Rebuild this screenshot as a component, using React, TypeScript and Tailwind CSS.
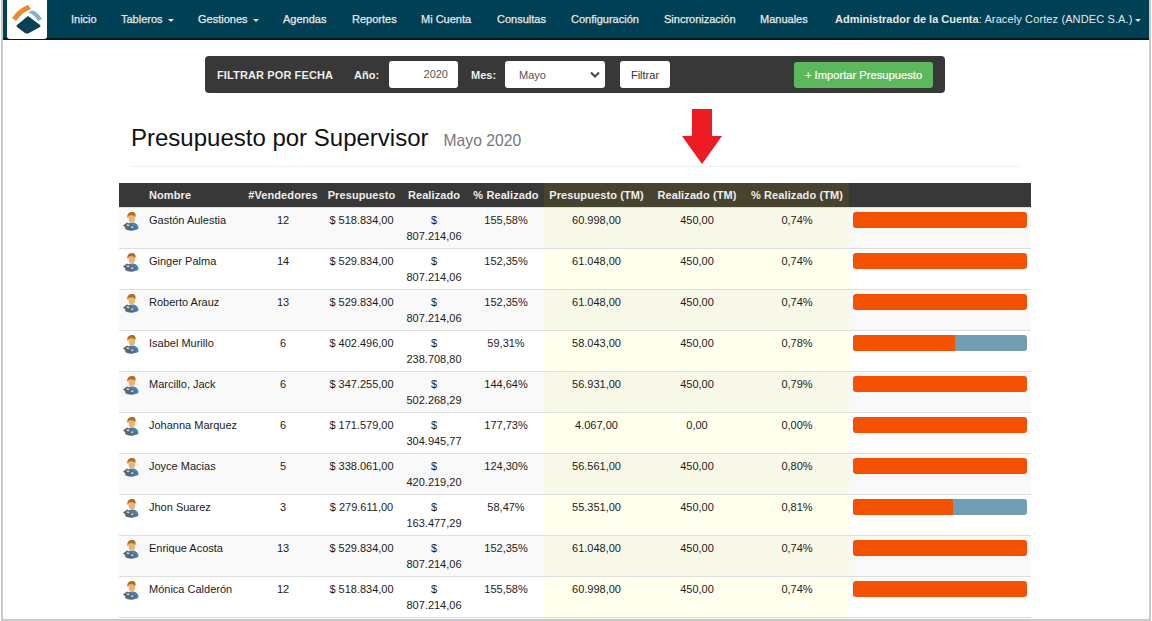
const navItems = [
  { label: "Inicio", w: "w-[50px]" },
  { label: "Tableros", caret: true, w: "w-[77px]" },
  { label: "Gestiones", caret: true, w: "w-[85px]" },
  { label: "Agendas", w: "w-[69px]" },
  { label: "Reportes", w: "w-[69px]" },
  { label: "Mi Cuenta", w: "w-[76px]" },
  { label: "Consultas", w: "w-[74px]" },
  { label: "Configuración", w: "w-[93px]" },
  { label: "Sincronización", w: "w-[96px]" },
  { label: "Manuales", w: "w-[75px]" },
];

const rows = [
  ["Gastón Aulestia", "12", "$ 518.834,00", "$ 807.214,06", "155,58%", "60.998,00", "450,00", "0,74%", 100],
  ["Ginger Palma", "14", "$ 529.834,00", "$ 807.214,06", "152,35%", "61.048,00", "450,00", "0,74%", 100],
  ["Roberto Arauz", "13", "$ 529.834,00", "$ 807.214,06", "152,35%", "61.048,00", "450,00", "0,74%", 100],
  ["Isabel Murillo", "6", "$ 402.496,00", "$ 238.708,80", "59,31%", "58.043,00", "450,00", "0,78%", 58.6],
  ["Marcillo, Jack", "6", "$ 347.255,00", "$ 502.268,29", "144,64%", "56.931,00", "450,00", "0,79%", 100],
  ["Johanna Marquez", "6", "$ 171.579,00", "$ 304.945,77", "177,73%", "4.067,00", "0,00", "0,00%", 100],
  ["Joyce Macias", "5", "$ 338.061,00", "$ 420.219,20", "124,30%", "56.561,00", "450,00", "0,80%", 100],
  ["Jhon Suarez", "3", "$ 279.611,00", "$ 163.477,29", "58,47%", "55.351,00", "450,00", "0,81%", 57.5],
  ["Enrique Acosta", "13", "$ 529.834,00", "$ 807.214,06", "152,35%", "61.048,00", "450,00", "0,74%", 100],
  ["Mónica Calderón", "12", "$ 518.834,00", "$ 807.214,06", "155,58%", "60.998,00", "450,00", "0,74%", 100],
] as const;

const Caret = () => (
  <span className="inline-block ml-[5px] align-middle border-x-[3px] border-t-[3px] border-x-transparent border-t-[#e8e8e8]"></span>
);

const Logo = () => (
  <svg width="40" height="39" viewBox="0 0 40 39">
    <path d="M5 18 C10 11 15 7 21 5 L24 9 C18 11 13 15 9 21 Z" fill="#f08a2c" />
    <path d="M23 11 C27 9 31 13 35 19 L31 21 C29 17 26 14 22 13 Z" fill="#7fb3cc" />
    <path d="M21 16 L33 25 Q34 26 33 27 L22 33 Q20 34 18 33 L10 27 Q9 26 10 25 Z" fill="#0d4057" />
  </svg>
);

const UserIcon = () => (
  <svg width="16" height="19" viewBox="0 0 16 19">
    <path d="M2 17 C3 12 6 10.5 9.5 10.5 C13 10.5 15.5 13 15.5 16.5 C13 19 5 19.5 2 17 Z" fill="#3f82bd" />
    <path d="M5 3 C6 1 11 1 12 3 L12 8 C11 11 7 11 6 9 Z" fill="#f2b071" />
    <path d="M4.5 6 C3.5 1 7 0 9 0 C12 0 13 2 12.5 5 C11 3 8 3 6 3.5 Z" fill="#a8701f" />
    <path d="M0 13.5 L4 10.5 L13 15 L9 18.5 L5 17.5 Z" fill="#59646d" />
    <path d="M3 13 L5 12 L7 13.5 L5 14.5 Z M7.5 15 L9.5 14 L11 15 L9 16.5 Z" fill="#c3ccd3" />
  </svg>
);

const App = () => {
  return (
    <div className="relative w-[1150px] h-[621px] ml-px overflow-hidden bg-white border-x-2 border-b-2 border-[#c9c9c9] font-['Liberation_Sans',Arial,sans-serif] text-[11px] leading-4 text-[#1c1c1c]">
      {/* NAV */}
      <div className="flex items-start h-10 -ml-px bg-[#004054] border-b-2 border-[#0b1a20] text-[11px] text-[#e8e8e8]">
        <div className="flex items-center justify-center w-10 h-[39px] ml-[5px] bg-white rounded-b-[3px]">
          <Logo />
        </div>
        <div className="flex pl-[10px] [-webkit-text-stroke:0.25px_#e8e8e8]">
          {navItems.map((item) => (
            <div key={item.label} className={`${item.w} h-[38px] pl-[14px] leading-[38px] whitespace-nowrap`}>
              {item.label}
              {item.caret && <Caret />}
            </div>
          ))}
        </div>
        <div className="ml-[14px] h-[38px] leading-[38px] whitespace-nowrap">
          <span className="font-bold">Administrador de la Cuenta</span>
          <span className="tracking-[0.12px]">: Aracely Cortez (ANDEC S.A.)</span>
          <span className="inline-block ml-[2px] align-middle border-x-[3px] border-t-[3px] border-x-transparent border-t-[#e8e8e8]"></span>
        </div>
      </div>

      {/* FILTRO */}
      <div className="flex items-center w-[740px] h-[37px] mt-4 ml-[202px] px-3 bg-[#383838] rounded-[4px] text-[11px] font-bold text-[#eee]">
        <span className="w-[137px] whitespace-nowrap tracking-[0.12px]">FILTRAR POR FECHA</span>
        <span className="w-[35px]">Año:</span>
        <div className="w-[69px] h-[27px] pr-[10px] bg-white rounded-[3px] text-right font-normal text-[#555] leading-[27px]">
          2020
        </div>
        <span className="w-[34px] ml-[13px]">Mes:</span>
        <div className="flex items-center justify-between w-[100px] h-[27px] pl-[14px] pr-[5px] bg-white rounded-[3px] font-normal text-[#555]">
          Mayo
          <svg width="10" height="7" viewBox="0 0 10 7">
            <path d="M1 1.5 L5 5.5 L9 1.5" fill="none" stroke="#444" strokeWidth="2" />
          </svg>
        </div>
        <div className="flex items-center justify-center w-[50px] h-[27px] ml-[15px] bg-white rounded-[3px] font-normal text-[#333]">
          Filtrar
        </div>
        <div className="flex items-center justify-center w-[139px] h-[26px] ml-auto bg-[#5cb85c] rounded-[3px] text-[11.2px] font-normal text-white [-webkit-text-stroke:0.2px_#fff]">
          + Importar Presupuesto
        </div>
      </div>

      {/* TITULO */}
      <div className="flex items-baseline w-[888px] h-[57px] mt-[17px] ml-[128px] pt-[14px] border-b border-[#eee] whitespace-nowrap">
        <h1 className="text-[24px] leading-[28px] text-[#111]">Presupuesto por Supervisor</h1>
        <span className="ml-[15px] text-[15.7px] leading-[28px] text-[#777]">Mayo 2020</span>
      </div>

      {/* FLECHA */}
      <svg className="absolute left-[679px] top-[109px]" width="40" height="55" viewBox="0 0 40 55">
        <path d="M10 0 H30 V27 H40 L20 55 L0 27 H10 Z" fill="#ed1c24" />
      </svg>

      {/* TABLA */}
      <table className="w-[912px] mt-4 ml-[116px] table-fixed border-separate border-spacing-0 text-center">
        <colgroup>
          <col className="w-[26px]" />
          <col className="w-[98px]" />
          <col className="w-[80px]" />
          <col className="w-[77px]" />
          <col className="w-[68px]" />
          <col className="w-[76px]" />
          <col className="w-[105px]" />
          <col className="w-[96px]" />
          <col className="w-[104px]" />
          <col className="w-[182px]" />
        </colgroup>
        <thead>
          <tr className="h-6 bg-[#383838] font-bold text-[#eee] tracking-[0.1px]">
            <th></th>
            <th className="pl-1 text-left">Nombre</th>
            <th className="whitespace-nowrap">#Vendedores</th>
            <th>Presupuesto</th>
            <th>Realizado</th>
            <th className="whitespace-nowrap">% Realizado</th>
            <th className="bg-[#46432f] whitespace-nowrap">Presupuesto (TM)</th>
            <th className="bg-[#46432f] whitespace-nowrap">Realizado (TM)</th>
            <th className="bg-[#46432f] whitespace-nowrap">% Realizado (TM)</th>
            <th></th>
          </tr>
        </thead>
        <tbody>
          {rows.map((row, i) => {
            const odd = i % 2 === 0;
            const last = i === rows.length - 1;
            const cell = `pt-1 border-t border-[#ddd] align-top ${last ? "h-[42px] border-b" : "h-[41px]"}`;
            const tm = odd ? "bg-[#f8f8e8]" : "bg-[#ffffee]";
            return (
              <tr key={row[0]} className={odd ? "bg-[#f9f9f9]" : "bg-white"}>
                <td className={`${cell} pl-1`}>
                  <UserIcon />
                </td>
                <td className={`${cell} pl-1 text-left whitespace-nowrap`}>{row[0]}</td>
                <td className={cell}>{row[1]}</td>
                <td className={`${cell} whitespace-nowrap`}>{row[2]}</td>
                <td className={`${cell} px-1`}>{row[3]}</td>
                <td className={cell}>{row[4]}</td>
                <td className={`${cell} ${tm}`}>{row[5]}</td>
                <td className={`${cell} ${tm}`}>{row[6]}</td>
                <td className={`${cell} ${tm}`}>{row[7]}</td>
                <td className={`${cell} px-1`}>
                  <div className="h-4 overflow-hidden rounded-[3px] bg-[#729eb3]">
                    <div className="h-full bg-[#f45100]" style={{ width: `${row[8]}%` }}></div>
                  </div>
                </td>
              </tr>
            );
          })}
        </tbody>
      </table>
    </div>
  );
};

export default App;
